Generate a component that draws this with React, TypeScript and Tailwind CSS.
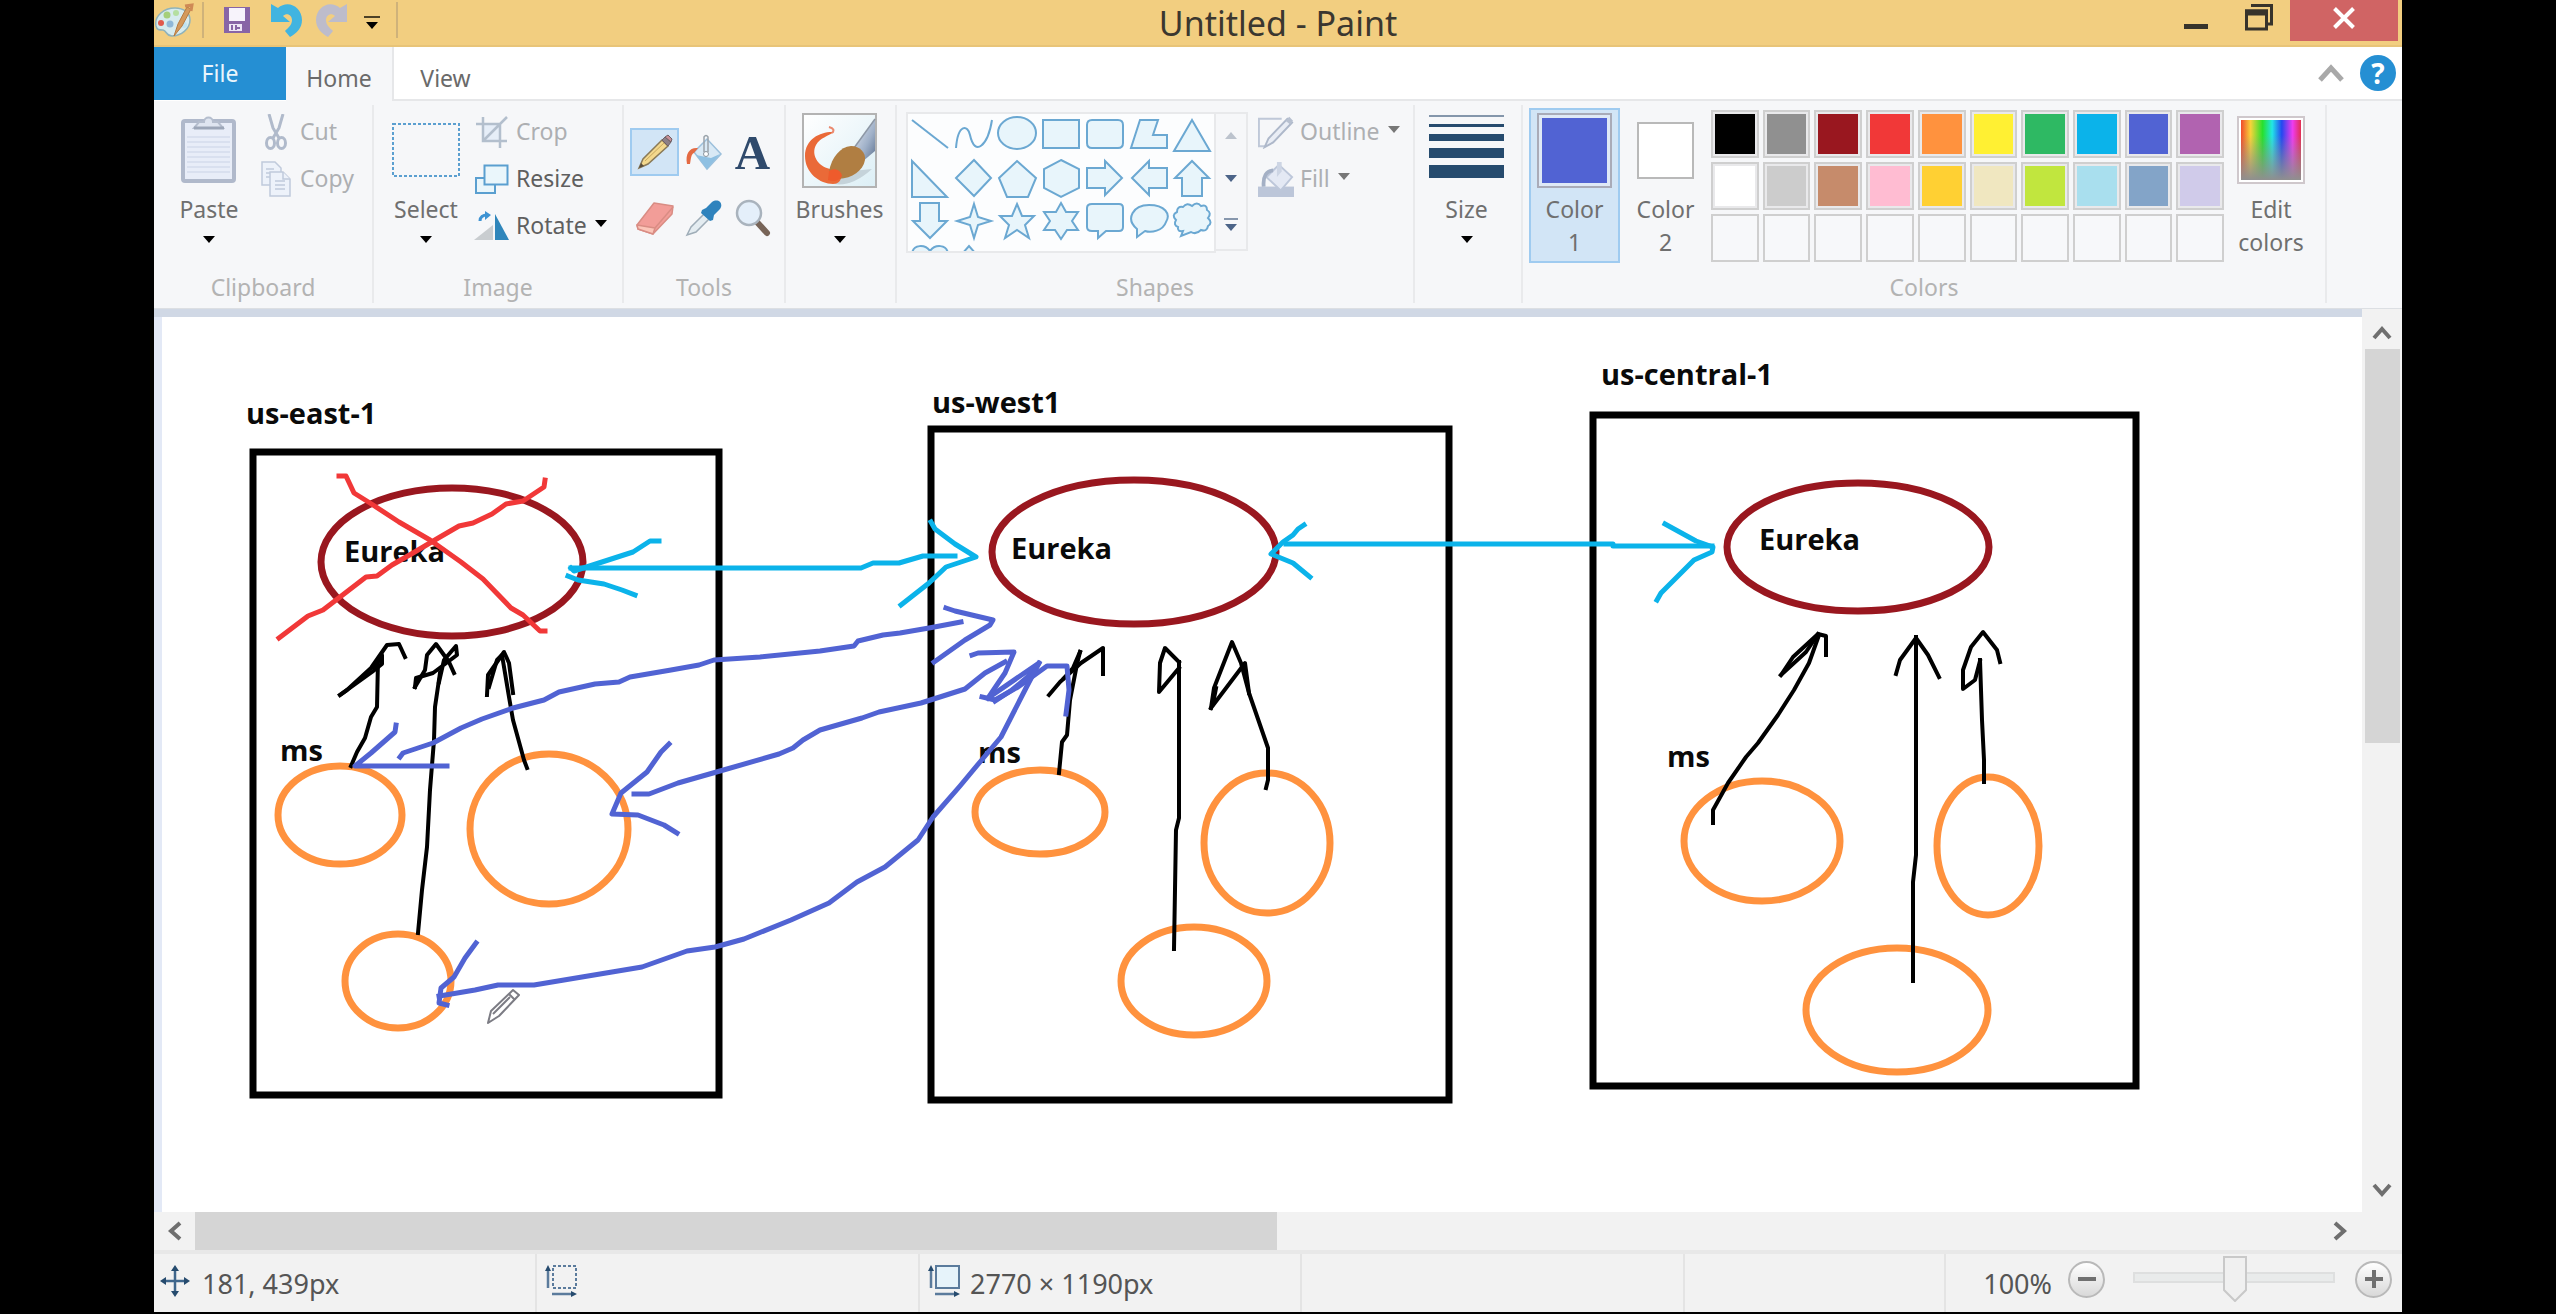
import React from "react";

const UI = "font-['Noto_Sans','Open_Sans',sans-serif]";

type P = { className?: string };

function Caret({ className = "text-black" }: P) {
  return (
    <svg viewBox="0 0 12 7" className={`h-[7px] w-3 shrink-0 ${className}`} aria-hidden="true">
      <path d="M0 0H12L6 7Z" fill="currentColor" />
    </svg>
  );
}

/* ---------- title bar ---------- */

function PaletteIcon() {
  return (
    <svg viewBox="0 0 40 36" className="h-9 w-10" aria-hidden="true">
      <path d="M2 24C0 14 10 6 21 6c9 0 15 5 15 12 0 9-9 16-18 16-6 0-5-5-9-6-4 0-6 0-7-4Z" fill="#d6ebee" stroke="#8fb3bb" strokeWidth="1.5" />
      <circle cx="7" cy="21" r="3" fill="#e0594c" />
      <circle cx="13" cy="13" r="3.5" fill="#a5cf7a" />
      <circle cx="22" cy="11" r="3" fill="#b4dfa0" />
      <circle cx="16" cy="22" r="3.5" fill="#8fb8d8" />
      <circle cx="30" cy="23" r="3" fill="#bfe4f2" />
      <path d="M20 34 24 22 33 5 37 7 28 24Z" fill="#d49a5c" stroke="#b87a3e" strokeWidth="1" />
      <path d="M31 4 38 3 37 9" fill="none" stroke="#cf8a55" strokeWidth="3" />
    </svg>
  );
}

function SaveIcon() {
  return (
    <svg viewBox="0 0 26 26" className="h-[26px] w-[26px]" aria-hidden="true">
      <rect width="26" height="26" fill="#8865a6" />
      <rect x="5" y="1" width="16" height="13" fill="#f7f3fb" />
      <rect x="5" y="17" width="13" height="7" fill="#eee6f5" />
      <path d="M8 18v5M12 18v5M13 21h3" stroke="#8865a6" strokeWidth="2" />
    </svg>
  );
}

function UndoIcon({ redo = false }: { redo?: boolean }) {
  return (
    <svg viewBox="0 0 32 34" className={`h-[34px] w-8 ${redo ? "-scale-x-100 text-[#bdbccb]" : "text-[#41b4e0]"}`} aria-hidden="true">
      <path d="M1 1V19H20L13 13C17 9 22 12 22 17 22 22 18 25 15 28L20 34C27 30 32 25 32 17 32 4 18-4 8 5Z" fill="currentColor" />
    </svg>
  );
}

function TitleBar() {
  return (
    <header className="grid h-[47px] grid-cols-[1fr_auto_1fr] items-start bg-[#f2ce80] shadow-[inset_0_-2px_0_#e8c478]">
      <div className="flex h-10 items-center">
        <PaletteIcon />
        <span className="ml-2 h-9 w-0.5 bg-[#cfb27a]" />
        <button aria-label="Save" className="ml-5"><SaveIcon /></button>
        <button aria-label="Undo" className="ml-5"><UndoIcon /></button>
        <button aria-label="Redo" className="ml-3.5"><UndoIcon redo /></button>
        <button aria-label="Customize toolbar" className="ml-4 flex flex-col items-center gap-1 pt-1">
          <span className="h-0.5 w-4 bg-[#4d4126]" />
          <Caret />
        </button>
        <span className="ml-4 h-9 w-0.5 bg-[#cfb27a]" />
      </div>
      <h1 className="text-[34px] leading-[47px] text-[#3b372f]">Untitled - Paint</h1>
      <div className="flex justify-end pr-1">
        <button aria-label="Minimize" className="mr-9 h-10 pt-3">
          <span className="block h-[5px] w-6 bg-[#37332b]" />
        </button>
        <button aria-label="Restore" className="mr-4 h-9">
          <svg viewBox="0 0 30 28" className="h-7 w-[30px]" aria-hidden="true">
            <path d="M7 1.5H27.5V20H24" fill="none" stroke="#37332b" strokeWidth="3" />
            <rect x="2.5" y="7" width="20" height="18" fill="none" stroke="#37332b" strokeWidth="3" />
            <rect x="1" y="5.5" width="23" height="6" fill="#37332b" />
          </svg>
        </button>
        <button aria-label="Close" className="flex h-[41px] w-[108px] items-center justify-center bg-[#d06464] pb-1.5">
          <svg viewBox="0 0 22 22" className="h-[22px] w-[22px]" aria-hidden="true">
            <path d="M1.5 1.5 20.5 20.5M20.5 1.5 1.5 20.5" stroke="#fff" strokeWidth="4" />
          </svg>
        </button>
      </div>
    </header>
  );
}

function TabBar() {
  return (
    <nav className="flex h-[54px] items-stretch bg-white text-[23px] text-[#6a6a6a]">
      <button className="h-[53px] w-[132px] bg-[#258fd3] text-[#e9f5fc]">File</button>
      <button className="w-[108px] border-r-2 border-[#e6e7e9] bg-[#f6f7f9] pt-2">Home</button>
      <button className="w-[103px] border-b-2 border-[#e6e7e9] pt-2.5">View</button>
      <div className="flex flex-1 items-center justify-end gap-4 border-b-2 border-[#e6e7e9] pr-1.5">
        <button aria-label="Collapse ribbon">
          <svg viewBox="0 0 26 20" className="h-5 w-[26px]" aria-hidden="true">
            <path d="M2 17 13 5 24 17" fill="none" stroke="#a9a9a9" strokeWidth="5" />
          </svg>
        </button>
        <button aria-label="Help" className="h-9 w-9 rounded-full bg-[#258fd3] text-[28px] leading-9 font-bold text-white">?</button>
      </div>
    </nav>
  );
}

/* ---------- ribbon ---------- */

function Group({ label, className = "", children }: { label?: string; className?: string; children: React.ReactNode }) {
  return (
    <section aria-label={label} className={`flex h-[198px] flex-col justify-between border-r-2 border-[#e9eaec] ${className}`}>
      <div className="flex pt-[3px]">{children}</div>
      <div className="h-8 text-center text-[23px] leading-8 text-[#b3b3b3]">{label}</div>
    </section>
  );
}

function BigButton({ icon, lines, caret, className = "", active = false }: { icon: React.ReactNode; lines: string[]; caret?: boolean; className?: string; active?: boolean }) {
  return (
    <button className={`flex h-[155px] shrink-0 flex-col items-center border-2 text-[23px] leading-[33px] text-[#6f6f6f] ${active ? "border-[#9fcbf0] bg-[#d2e5f6]" : "border-transparent"} ${className}`}>
      <span className="mb-[3px] flex h-20 items-center">{icon}</span>
      {lines.map((l) => <span key={l}>{l}</span>)}
      {caret && <Caret className="mt-2.5 text-black" />}
    </button>
  );
}

function RowButton({ icon, label, disabled = false, caret = false }: { icon: React.ReactNode; label: string; disabled?: boolean; caret?: boolean }) {
  return (
    <button className={`flex h-[47px] items-center text-[23px] leading-[33px] ${disabled ? "text-[#adafb2]" : "text-[#5f5f5f]"}`}>
      <span className="mr-1.5 flex w-9 justify-center">{icon}</span>
      {label}
      {caret && <Caret className={`mb-1 ml-2 ${disabled ? "text-[#777]" : "text-black"}`} />}
    </button>
  );
}

const PasteIcon = () => (
  <svg viewBox="0 0 58 68" className="h-[68px] w-[58px]" aria-hidden="true">
    <rect x="3" y="5" width="51" height="60" rx="2" fill="#e8edf8" stroke="#b0b9cb" strokeWidth="4" />
    <path d="M7 21H50M7 26H50M7 31H50M7 36H50M7 41H50M7 46H50M7 51H50M7 56H50" stroke="#d3dcec" strokeWidth="1.5" />
    <path d="M14 12H43L38 6H33C33 0 24 0 24 6H19Z" fill="#dfe5f0" stroke="#b5bece" strokeWidth="2" />
    <path d="M14 12H44" stroke="#9ca6b8" strokeWidth="3" />
  </svg>
);

const CutIcon = () => (
  <svg viewBox="0 0 24 36" className="h-9 w-6" fill="none" stroke="#b0bacb" strokeWidth="3" aria-hidden="true">
    <path d="M5 0 9 14 15 24M19 0 15 14 9 24" />
    <ellipse cx="6.5" cy="29" rx="4" ry="5.5" />
    <ellipse cx="17.5" cy="29" rx="4" ry="5.5" />
  </svg>
);

const CopyIcon = () => (
  <svg viewBox="0 0 30 36" className="h-9 w-[30px]" fill="#edf2fa" stroke="#c0cadb" strokeWidth="1.5" aria-hidden="true">
    <path d="M1 1H14L20 7V24H1Z" />
    <path d="M5 8H13M5 12H13M5 16H13" />
    <path d="M9 11H22L29 18V35H9Z" />
    <path d="M22 11V18H29M14 20H24M14 24H24M14 28H24" />
  </svg>
);

const CropIcon = () => (
  <svg viewBox="0 0 32 32" className="h-8 w-8" fill="none" stroke="#b3bfcd" strokeWidth="2.5" aria-hidden="true">
    <rect x="8" y="9" width="16" height="16" fill="#e6eef8" stroke="none" />
    <path d="M0 8H24V32M7 1V25H31M7 25 31 1" />
  </svg>
);

const ResizeIcon = () => (
  <svg viewBox="0 0 34 30" className="h-[30px] w-[34px]" fill="#eaf6fb" stroke="#5a9fd0" strokeWidth="2" aria-hidden="true">
    <rect x="1" y="14" width="19" height="15" />
    <rect x="9.5" y="1.5" width="23" height="19" />
  </svg>
);

const RotateIcon = () => (
  <svg viewBox="0 0 36 30" className="h-[30px] w-9" aria-hidden="true">
    <path d="M0 29 19 14V29Z" fill="#c9cdd0" />
    <path d="M21 3 35 29H21Z" fill="#2f86bb" />
    <path d="M6 10C6 6 9 4 13 4" fill="none" stroke="#3d93d3" strokeWidth="3" />
    <path d="M11 0 17 4 11 9Z" fill="#3d93d3" />
  </svg>
);

const PencilIcon = () => (
  <svg viewBox="0 0 38 38" className="h-[38px] w-[38px]" aria-hidden="true">
    <path d="M3 35 7 26 26 7 32 13 12 31Z" fill="#f3d88d" stroke="#8a7a58" strokeWidth="1.5" />
    <path d="M9 28 29 9" stroke="#c9a95f" strokeWidth="1" />
    <path d="M26 7 29 4 35 9 32 13Z" fill="#8c7f86" stroke="#6f6064" />
    <path d="M29 4 32 2 36 6 35 9Z" fill="#c98f95" stroke="#6f6064" />
    <path d="M3 35 5 30 8 33Z" fill="#5a4e3c" />
  </svg>
);

const BucketIcon = () => (
  <svg viewBox="0 0 38 38" className="h-[38px] w-[38px]" aria-hidden="true">
    <path d="M9 19 22 6 36 21 22 36Z" fill="#d9e9f5" stroke="#9cc0dc" strokeWidth="1.5" />
    <path d="M11 22 22 36 35 21 26 25Z" fill="#8fc0e2" />
    <path d="M2 31C0 20 5 14 13 15L9 20C6 21 6 26 5 31Z" fill="#e46a43" />
    <path d="M19 19V4Q21 1 23 4V19" fill="none" stroke="#9aa3ab" strokeWidth="1.5" />
    <circle cx="21" cy="21" r="2.5" fill="#fff" stroke="#8b959e" />
  </svg>
);

const EraserIcon = () => (
  <svg viewBox="0 0 40 36" className="h-9 w-10" stroke="#d98d84" strokeWidth="1.5" strokeLinejoin="round" aria-hidden="true">
    <path d="M2 25 19 3 38 6 37 14 18 34 3 29Z" fill="#f29d98" />
    <path d="M2 25 20 28 18 34 3 29Z" fill="#fbc5b8" />
    <path d="M20 28 38 7" fill="none" />
  </svg>
);

const PickerIcon = () => (
  <svg viewBox="0 0 38 38" className="h-[38px] w-[38px]" aria-hidden="true">
    <path d="M2 36 6 28 19 15 24 20 11 33Z" fill="#e4ecf1" stroke="#9fadb8" strokeWidth="1.5" />
    <path d="M17 11 21 9 27 3C33-1 39 4 35 10L29 16 28 21 25 22 16 14Z" fill="#2f83bd" />
  </svg>
);

const MagnifierIcon = () => (
  <svg viewBox="0 0 38 38" className="h-[38px] w-[38px]" aria-hidden="true">
    <path d="M22 22 33 34" stroke="#776458" strokeWidth="6" strokeLinecap="round" />
    <circle cx="15" cy="14" r="12" fill="#e4effa" stroke="#a9b3bd" strokeWidth="2.5" />
  </svg>
);

const BrushIcon = () => (
  <svg viewBox="0 0 75 75" className="h-[75px] w-[75px]" aria-hidden="true">
    <defs>
      <linearGradient id="brushHandle" x1="0" y1="0" x2="1" y2="1">
        <stop offset="0" stopColor="#e8edf4" />
        <stop offset="0.6" stopColor="#9fb0c8" />
        <stop offset="1" stopColor="#5f7391" />
      </linearGradient>
      <linearGradient id="brushPaper" x1="0" y1="0" x2="1" y2="1">
        <stop offset="0" stopColor="#ffffff" />
        <stop offset="1" stopColor="#dceff6" />
      </linearGradient>
    </defs>
    <rect x="1" y="1" width="73" height="73" fill="url(#brushPaper)" stroke="#b3b3b3" strokeWidth="2" />
    <path d="M32 71Q50 74 70 56L50 58Z" fill="#c5d3da" />
    <path d="M32 19C20 18 3 25 3 43 3 60 18 71 31 71 37 71 40 66 40 61L28 56C15 53 9 41 14 32 18 25 26 23 32 19Z" fill="#ea6a38" />
    <path d="M27 14Q34 16 30 20" fill="none" stroke="#ea8a70" strokeWidth="2" />
    <path d="M52 35 73 6V38L60 49Z" fill="url(#brushHandle)" />
    <path d="M52 35 73 6" stroke="#8d97a5" strokeWidth="1.5" />
    <path d="M27 58C30 44 38 34 49 33 58 33 64 40 63 47 61 58 50 65 37 66Z" fill="#b07e42" />
    <path d="M27 58C32 54 39 57 40 63 37 68 32 69 26 67Z" fill="#ee5b2c" />
  </svg>
);

const OutlineIcon = () => (
  <svg viewBox="0 0 38 34" className="h-[34px] w-[38px]" aria-hidden="true">
    <path d="M25 3H1V32H8" fill="none" stroke="#bfc8d8" strokeWidth="2" />
    <path d="M7 33 11 24 31 3 36 7 16 28Z" fill="#e9edf5" stroke="#aeb8ca" strokeWidth="2" />
    <path d="M29 5 33 1 37 5 34 9Z" fill="#b7c0d0" />
  </svg>
);

const FillIcon = () => (
  <svg viewBox="0 0 38 40" className="h-10 w-[38px]" aria-hidden="true">
    <rect y="28" width="38" height="11" fill="#bcc6d9" />
    <path d="M9 18 22 5 36 18 24 32Z" fill="#e4e9f4" stroke="#bdc7da" strokeWidth="2" />
    <path d="M6 28C5 17 9 11 16 11" fill="none" stroke="#a4b0c5" strokeWidth="4" />
    <path d="M20 18V2H25V12" fill="#cdd5e4" />
  </svg>
);

const SizeIcon = () => (
  <span className="mb-2 flex w-[75px] flex-col gap-[7px]">
    <span className="h-0.5 bg-[#8496ab]" />
    <span className="h-[3px] bg-[#264b6e]" />
    <span className="h-[7px] bg-[#264b6e]" />
    <span className="h-2.5 bg-[#264b6e]" />
    <span className="h-[13px] bg-[#264b6e]" />
  </span>
);

const SHAPES = [
  "M4 7 40 35",
  "M4 35C6 10 16 12 18 22 23 45 36 32 40 7",
  "M3 20a19 16 0 1 0 38 0a19 16 0 1 0-38 0Z",
  "M4 7H40V35H4Z",
  "M9 7H35Q40 7 40 12V30Q40 35 35 35H9Q4 35 4 30V12Q4 7 9 7Z",
  "M13 7H31L26 22H40V35H4Z",
  "M22 7 40 38H4Z",
  "M4 5 39 41H4Z",
  "M22 4 39 22 22 40 4 22Z",
  "M22 5 41 22 33 41H12L4 22Z",
  "M22 4 40 13V32L22 41 5 32V13Z",
  "M4 12H22V5L39 22 22 39V32H4Z",
  "M40 12H22V5L5 22 22 39V32H40Z",
  "M12 40V22H5L22 5 39 22H32V40Z",
  "M12 4H31V22H39L22 39 5 22H12Z",
  "M22 5 26 18 39 22 26 26 22 39 18 26 5 22 18 18Z",
  "M22 5 27 17H39L30 26 34 39 22 31 10 39 14 26 5 17H17Z",
  "M22 4 27 13H39L33 22 39 31H28L22 40 16 31H5L11 22 5 13H17Z",
  "M9 5H36Q40 5 40 9V28Q40 32 36 32H23L15 39V32H9Q4 32 4 28V9Q4 5 9 5Z",
  "M10 38V30C-2 20 6 6 22 6S44 15 39 23C36 32 24 34 18 32Z",
  "M11 37 13 32Q7 33 8 28 3 26 6 21 1 16 7 13 7 7 13 8 17 3 22 7 27 2 31 7 37 5 37 11 42 14 38 19 43 24 38 27 37 33 31 31 26 36 21 33Z",
  "M4 12C5 2 17 2 22 9 27 2 39 2 40 12",
  "M10 12 17 4 24 12",
];

function ShapeGallery() {
  return (
    <div className="mt-1 ml-[9px] flex h-[141px] shrink-0">
      <div className="grid w-[310px] grid-cols-7 content-start overflow-hidden border-2 border-[#e8e9eb] bg-[#fcfdfe]">
        {SHAPES.map((d, i) => (
          <button key={i} aria-label={`Shape ${i + 1}`} className="h-[43px]">
            <svg viewBox="0 1 44 43" className="h-[43px] w-11" fill={i < 2 ? "none" : "#e8f5fb"} stroke="#6ba8d2" strokeWidth="2" aria-hidden="true">
              <path d={d} />
            </svg>
          </button>
        ))}
      </div>
      <div className="flex h-[139px] w-8 flex-col items-center justify-around border-2 border-l-0 border-[#e8e9eb]">
        <button aria-label="Scroll shapes up" className="rotate-180"><Caret className="text-[#bcc3cd]" /></button>
        <button aria-label="Scroll shapes down"><Caret className="text-[#4c6488]" /></button>
        <button aria-label="More shapes" className="flex flex-col items-center gap-1">
          <span className="h-0.5 w-3.5 bg-[#8797ad]" />
          <Caret className="text-[#4c6488]" />
        </button>
      </div>
    </div>
  );
}

const SWATCHES: { name: string; cls: string }[] = [
  { name: "Black", cls: "bg-black" },
  { name: "Gray", cls: "bg-[#909090]" },
  { name: "Dark red", cls: "bg-[#99171f]" },
  { name: "Red", cls: "bg-[#f13838]" },
  { name: "Orange", cls: "bg-[#ff923e]" },
  { name: "Yellow", cls: "bg-[#fff033]" },
  { name: "Green", cls: "bg-[#2eb963]" },
  { name: "Turquoise", cls: "bg-[#0bb3ea]" },
  { name: "Indigo", cls: "bg-[#5163d3]" },
  { name: "Purple", cls: "bg-[#b163b0]" },
  { name: "White", cls: "bg-white" },
  { name: "Light gray", cls: "bg-[#cccccc]" },
  { name: "Brown", cls: "bg-[#c68b6b]" },
  { name: "Rose", cls: "bg-[#ffbcd2]" },
  { name: "Gold", cls: "bg-[#ffd033]" },
  { name: "Light yellow", cls: "bg-[#f0e7c0]" },
  { name: "Lime", cls: "bg-[#c1e63e]" },
  { name: "Light turquoise", cls: "bg-[#a9dfee]" },
  { name: "Blue-gray", cls: "bg-[#83a4c8]" },
  { name: "Lavender", cls: "bg-[#d0cbea]" },
];

function Ribbon() {
  return (
    <div className="flex h-[207px] items-start bg-[#f6f7f9] pt-1">
      <Group label="Clipboard" className="w-[220px]">
        <BigButton className="ml-4 w-[78px]" icon={<PasteIcon />} lines={["Paste"]} caret />
        <div className="ml-2.5">
          <RowButton icon={<CutIcon />} label="Cut" disabled />
          <RowButton icon={<CopyIcon />} label="Copy" disabled />
        </div>
      </Group>
      <Group label="Image" className="w-[250px]">
        <BigButton
          className="ml-3 w-20"
          icon={
            <svg viewBox="0 0 68 54" className="h-[54px] w-[68px]" aria-hidden="true">
              <rect x="1" y="1" width="66" height="52" fill="none" stroke="#5b9fd0" strokeWidth="2" strokeDasharray="3 2" />
            </svg>
          }
          lines={["Select"]}
          caret
        />
        <div className="ml-2">
          <RowButton icon={<CropIcon />} label="Crop" disabled />
          <RowButton icon={<ResizeIcon />} label="Resize" />
          <RowButton icon={<RotateIcon />} label="Rotate" caret />
        </div>
      </Group>
      <Group label="Tools" className="w-[162px]">
        <div className="mt-5 ml-1.5 grid grid-cols-[repeat(3,49px)] gap-y-[18px]">
          {[
            { n: "Pencil", i: <PencilIcon /> },
            { n: "Fill with color", i: <BucketIcon /> },
            { n: "Text", i: <span className="font-['Liberation_Serif',serif] text-[49px] leading-[49px] font-bold text-[#2f4a6c]">A</span> },
            { n: "Eraser", i: <EraserIcon /> },
            { n: "Color picker", i: <PickerIcon /> },
            { n: "Magnifier", i: <MagnifierIcon /> },
          ].map((t, k) => (
            <button key={t.n} aria-label={t.n} className={`flex h-12 items-center justify-center border-2 ${k === 0 ? "border-[#9fcbf0] bg-[#d2e5f6]" : "border-transparent"}`}>
              {t.i}
            </button>
          ))}
        </div>
      </Group>
      <Group className="w-[111px]">
        <BigButton className="w-[107px]" icon={<BrushIcon />} lines={["Brushes"]} caret />
      </Group>
      <Group label="Shapes" className="w-[518px]">
        <ShapeGallery />
        <div className="ml-2.5">
          <RowButton icon={<OutlineIcon />} label="Outline" disabled caret />
          <RowButton icon={<FillIcon />} label="Fill" disabled caret />
        </div>
      </Group>
      <Group className="w-[108px]">
        <BigButton className="w-[103px]" icon={<SizeIcon />} lines={["Size"]} caret />
      </Group>
      <Group label="Colors" className="w-[804px]">
        <BigButton
          active
          className="ml-1.5 w-[91px]"
          icon={<span className="h-[75px] w-[75px] border-2 border-[#a9abb8] bg-[#dfe9f6] p-[3px]"><span className="block h-full bg-[#5163d3]" /></span>}
          lines={["Color", "1"]}
        />
        <BigButton
          className="w-[91px]"
          icon={<span className="h-[57px] w-[57px] border-2 border-[#b9b9b9] bg-white" />}
          lines={["Color", "2"]}
        />
        <div className="mt-0.5 grid w-[513px] grid-cols-10 gap-x-1 gap-y-[3px]">
          {SWATCHES.map((s) => (
            <button key={s.name} aria-label={s.name} className="h-12 border-2 border-[#cfcfcf] bg-[#e9e9eb] p-0.5">
              <span className={`block h-full ${s.cls}`} />
            </button>
          ))}
          {Array.from({ length: 10 }, (_, i) => (
            <button key={i} aria-label={`Custom color ${i + 1}`} className="h-12 border-2 border-[#cfcfcf] bg-[#f7f8fa]" />
          ))}
        </div>
        <BigButton
          className="ml-1.5 w-[82px]"
          icon={
            <span className="h-[68px] w-[68px] border-2 border-[#cfc8cc] bg-white p-0.5">
              <span className="block h-full bg-[linear-gradient(to_top,#8f8f8f,transparent_75%),linear-gradient(to_right,#f04a2c,#f8d33a_16%,#27e02d_36%,#22e6e6_52%,#2447f0_68%,#ee3cf0_86%,#e2304f)]" />
            </span>
          }
          lines={["Edit", "colors"]}
        />
      </Group>
    </div>
  );
}

/* ---------- canvas ---------- */

const BOXES = [
  [253, 452, 466, 643],
  [931, 429, 518, 671],
  [1593, 415, 543, 671],
];

const EUREKA = [
  [452, 562, 131, 74],
  [1134, 552, 142, 72],
  [1858, 547, 131, 64],
];

const SERVICES = [
  [340, 815, 62, 49],
  [549, 829, 79, 75],
  [398, 981, 53, 47],
  [1040, 812, 65, 42],
  [1267, 843, 63, 70],
  [1194, 981, 73, 54],
  [1762, 841, 78, 60],
  [1988, 846, 51, 69],
  [1897, 1010, 91, 62],
];

const BLACK = [
  "378,660 377,707 371,717 365,738 357,752 351,766",
  "340,695 347,690 371,668 387,645 399,644 405,657",
  "340,695 372,672 382,664 382,655 374,668",
  "440,673 435,707 434,740 430,790 427,847 422,890 418,933",
  "415,687 425,670 427,655 436,644 449,662 454,673",
  "415,687 416,678 433,673 457,655 456,646 444,660 439,682",
  "487,695 488,675 504,652 509,663 513,693",
  "489,687 497,660 502,655 509,697 513,720 524,760 527,768",
  "1049,695 1060,682 1081,663 1103,648 1103,674",
  "1080,652 1077,664 1070,700 1067,735 1062,742 1059,773",
  "1064,678 1073,668 1080,652",
  "1179,662 1165,648 1160,663 1159,692 1179,668",
  "1179,662 1179,818 1176,830 1174,949",
  "1211,708 1214,688 1232,642 1241,663 1249,693 1268,748 1268,780 1266,788",
  "1211,708 1245,663 1249,693",
  "1213,704 1216,688",
  "1819,635 1809,663 1794,690 1778,715 1758,743 1746,757 1728,783 1713,810 1713,823",
  "1781,675 1793,657 1818,634 1826,636 1826,655",
  "1781,675 1806,652 1818,634",
  "1916,637 1916,855 1913,882 1913,981",
  "1896,674 1900,660 1916,638 1928,655 1939,677",
  "1980,660 1982,720 1984,760 1984,782",
  "2000,662 1997,650 1983,632 1971,647 1963,670 1963,689 1975,680 1980,661",
];

const RED = [
  "339,476 346,476 354,493 370,503 399,522 430,540 461,562 483,579 511,608 523,615 540,631 545,631",
  "545,480 544,487 523,501 506,504 492,514 473,523 459,526 440,537 413,553 392,565 377,576 366,577 340,597 323,610 308,616 279,638",
];

const CYAN = [
  "659,541 650,541 633,552 602,562 574,571 571,568",
  "568,576 578,580 604,584 622,590 635,595",
  "571,568 861,568 873,563 899,563 923,556 955,556",
  "931,522 935,529 955,544 976,557 946,567 929,583 901,605",
  "1286,544 1613,544 1613,546 1712,546",
  "1304,525 1298,529 1293,535 1283,542 1271,554 1293,563 1310,577",
  "1665,524 1696,541 1713,547 1712,552 1694,560 1679,575 1661,593 1657,600",
];

const BLUE = [
  "400,757 403,753 433,743 461,728 482,719 513,708 544,700 559,692 595,684 619,682 630,677 671,670 699,665 714,660 760,657 820,651 854,646 858,641 883,635 900,633 929,628 961,622",
  "396,725 395,732 371,753 355,766 447,766",
  "946,608 955,611 993,620 990,625 965,640 934,662",
  "634,794 649,794 678,783 720,771 779,754 793,748 803,740 820,730 862,718 879,712 921,703 965,689 985,673 1005,662",
  "669,744 661,752 647,772 621,793 612,814 638,815 664,825 677,833",
  "972,655 978,653 1014,652 1005,673 988,698",
  "982,697 995,700 1018,687 1047,666 1067,666 1069,690 1066,714",
  "988,698 1020,676 1039,663 1030,675 1012,690 995,701",
  "1039,663 1026,688 1001,737 980,762 960,786 933,817 918,840 885,867 857,882 829,903 791,920 744,939 715,947 687,951 642,967 612,972 534,985 498,985 475,990 439,996",
  "476,943 465,958 454,977 441,988 439,1003 447,1005",
];

const LABELS: [number, number, string][] = [
  [246, 424, "us-east-1"],
  [932, 413, "us-west1"],
  [1601, 385, "us-central-1"],
  [344, 562, "Eureka"],
  [1011, 559, "Eureka"],
  [1759, 550, "Eureka"],
  [280, 761, "ms"],
  [978, 763, "ms"],
  [1667, 767, "ms"],
];

function Strokes({ lines, color, width }: { lines: string[]; color: string; width: number }) {
  return (
    <g fill="none" stroke={color} strokeWidth={width} strokeLinejoin="round" strokeLinecap="square">
      {lines.map((p) => <polyline key={p} points={p} />)}
    </g>
  );
}

function Drawing() {
  return (
    <svg viewBox="162 317 2200 895" className="h-[895px] w-[2200px] shrink-0" role="img" aria-label="Eureka region diagram">
      <g fill="none" stroke="#000" strokeWidth="7">
        {BOXES.map(([x, y, w, h]) => <rect key={x} x={x} y={y} width={w} height={h} />)}
      </g>
      <g className="font-['Open_Sans','Noto_Sans',sans-serif] text-[29px] font-bold" fill="#0a0a0a">
        {LABELS.map(([x, y, t]) => <text key={`${x}-${y}`} x={x} y={y}>{t}</text>)}
      </g>
      <g fill="none" stroke="#99171f" strokeWidth="7">
        {EUREKA.map(([x, y, a, b]) => <ellipse key={x} cx={x} cy={y} rx={a} ry={b} />)}
      </g>
      <g fill="none" stroke="#ff923e" strokeWidth="7">
        {SERVICES.map(([x, y, a, b]) => <ellipse key={x} cx={x} cy={y} rx={a} ry={b} />)}
      </g>
      <Strokes lines={BLACK} color="#000" width={4} />
      <Strokes lines={CYAN} color="#0bb3ea" width={5} />
      <Strokes lines={RED} color="#f13838" width={5} />
      <Strokes lines={BLUE} color="#5163d3" width={5} />
      <g fill="#fff" stroke="#7c7c84" strokeWidth="2" strokeLinejoin="round">
        <path d="M488 1023 491 1011 513 990 519 995 499 1016Z" />
        <path d="M509 994 515 1000M493 1014 510 997" fill="none" />
      </g>
    </svg>
  );
}

function Chevron({ className = "" }: P) {
  return (
    <svg viewBox="0 0 20 16" className={`h-4 w-5 ${className}`} aria-hidden="true">
      <path d="M2 13 10 4 18 13" fill="none" stroke="#6f6f6f" strokeWidth="4" />
    </svg>
  );
}

function Workspace() {
  return (
    <div className="flex flex-1 flex-col">
      <div className="flex flex-1">
        <div className="flex min-w-0 flex-1 flex-col">
          <div className="h-[9px] border-t border-[#dcdfe3] bg-[#d0d8e5]" />
          <div className="flex flex-1 overflow-hidden border-l-8 border-[#e3e9f6] bg-white">
            <Drawing />
          </div>
        </div>
        <div className="flex w-10 shrink-0 flex-col items-center border-t border-[#dcdfe3] bg-[#f2f2f2]">
          <button aria-label="Scroll up" className="flex h-10 w-full items-center justify-center pt-2"><Chevron /></button>
          <div className="h-[394px] w-[35px] bg-[#d5d5d5]" />
          <div className="flex-1" />
          <button aria-label="Scroll down" className="flex h-11 w-full items-center justify-center"><Chevron className="rotate-180" /></button>
        </div>
      </div>
      <div className="flex h-[38px] items-stretch bg-[#f2f2f2] pr-10">
        <button aria-label="Scroll left" className="flex w-[41px] items-center justify-center"><Chevron className="-rotate-90" /></button>
        <div className="w-[1082px] bg-[#d5d5d5]" />
        <div className="flex-1" />
        <button aria-label="Scroll right" className="flex w-11 items-center justify-center"><Chevron className="rotate-90" /></button>
      </div>
    </div>
  );
}

/* ---------- status bar ---------- */

function SizeGlyph({ dashed = false }: { dashed?: boolean }) {
  return (
    <svg viewBox="0 0 36 34" className="mb-1 h-[34px] w-9" aria-hidden="true">
      <rect x="10" y="2" width="23" height="22" fill={dashed ? "none" : "#e6f3fa"} stroke="#5b7b9c" strokeWidth="2" strokeDasharray={dashed ? "3 2" : undefined} />
      <path d="M5 24V5M9 30H30" stroke="#5b7b9c" strokeWidth="2.5" />
      <path d="M2 7 5 1 8 7ZM28 27 34 30 28 33Z" fill="#264b6e" />
    </svg>
  );
}

function ZoomButton({ label, plus = false }: { label: string; plus?: boolean }) {
  return (
    <button aria-label={label} className="flex h-[37px] w-[37px] items-center justify-center rounded-full border-2 border-[#b9b9b9] bg-linear-to-b from-white to-[#d9d9d9]">
      <svg viewBox="0 0 18 18" className="h-[18px] w-[18px]" aria-hidden="true">
        <path d={plus ? "M0 9H18M9 0V18" : "M0 9H18"} stroke="#707070" strokeWidth="4" />
      </svg>
    </button>
  );
}

function StatusBar() {
  const cell = "flex items-center border-r-2 border-[#e4e4e4] px-1.5";
  return (
    <footer className="grid h-[62px] grid-cols-[383fr_383fr_382fr_383fr_261fr_456fr] border-t-4 border-[#e8e8e8] bg-[#f2f2f2] text-[27px] leading-9 text-[#555]">
      <div className={cell}>
        <svg viewBox="0 0 30 32" className="mr-3 mb-1 h-8 w-[30px]" aria-hidden="true">
          <path d="M15 3V29M3 16H27" stroke="#3f668c" strokeWidth="2.5" />
          <path d="M11 6 15 0 19 6ZM11 26 15 32 19 26ZM6 12 0 16 6 20ZM24 12 30 16 24 20Z" fill="#264b6e" />
        </svg>
        <span className="pt-0.5">181, 439px</span>
      </div>
      <div className={cell}><SizeGlyph dashed /></div>
      <div className={cell}><SizeGlyph /><span className="pt-0.5 pl-2">2770 × 1190px</span></div>
      <div className={cell} />
      <div className={cell} />
      <div className="flex items-center justify-end pr-2.5 pb-2">
        <span className="mr-4 pt-2.5">100%</span>
        <ZoomButton label="Zoom out" />
        <div className="relative mr-5 ml-7 h-[46px] w-[202px]">
          <svg viewBox="0 0 202 46" className="h-full w-full" aria-hidden="true">
            <rect x="1" y="17" width="200" height="9" fill="#e9ebeb" stroke="#dedfdf" strokeWidth="2" />
            <path d="M91 1H113V34L102 45 91 34Z" fill="#f0f0f0" stroke="#c9c9c9" strokeWidth="2" />
          </svg>
          <input aria-label="Zoom" type="range" min={0} max={100} defaultValue={50} className="absolute inset-0 h-full w-full opacity-0" />
        </div>
        <ZoomButton label="Zoom in" plus />
      </div>
    </footer>
  );
}

export default function App() {
  return (
    <div className={`flex min-h-screen flex-col bg-black px-[154px] pb-0.5 ${UI}`}>
      <main className="flex flex-1 flex-col overflow-hidden">
        <TitleBar />
        <TabBar />
        <Ribbon />
        <Workspace />
        <StatusBar />
      </main>
    </div>
  );
}
